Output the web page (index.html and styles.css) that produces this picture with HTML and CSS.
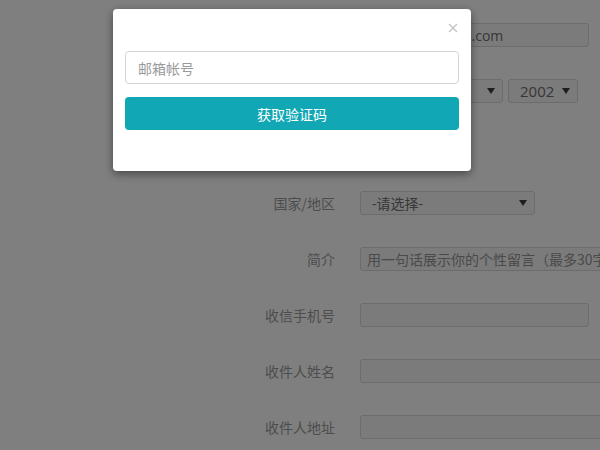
FILE: index.html
```html
<!DOCTYPE html>
<html lang="zh-CN">
<head>
<meta charset="utf-8">
<title>获取验证码</title>
<link rel="stylesheet" href="styles.css">
</head>
<body>
<form class="form">
  <label class="label">邮箱</label>
  <div class="field"><input class="text w229" type="text" value="wang56789@qq.com"></div>

  <label class="label">生日</label>
  <div class="field selects">
    <div class="select w68"><span>1</span><svg class="caret" width="8" height="6" viewBox="0 0 8 6"><path d="M0 0H8L4 6Z"/></svg></div>
    <div class="select w70"><span>1</span><svg class="caret" width="8" height="6" viewBox="0 0 8 6"><path d="M0 0H8L4 6Z"/></svg></div>
    <div class="select w70"><span>2002</span><svg class="caret" width="8" height="6" viewBox="0 0 8 6"><path d="M0 0H8L4 6Z"/></svg></div>
  </div>

  <label class="label">性别</label>
  <div class="field radios"><span>男</span><span>女</span></div>

  <label class="label">国家/地区</label>
  <div class="field"><div class="select w175"><span>-请选择-</span><svg class="caret" width="8" height="6" viewBox="0 0 8 6"><path d="M0 0H8L4 6Z"/></svg></div></div>

  <label class="label">简介</label>
  <div class="field"><input class="text w260" type="text" placeholder="用一句话展示你的个性留言（最多30字）"></div>

  <label class="label">收信手机号</label>
  <div class="field"><input class="text w229" type="text"></div>

  <label class="label">收件人姓名</label>
  <div class="field"><input class="text w260" type="text"></div>

  <label class="label">收件人地址</label>
  <div class="field"><input class="text w260" type="text"></div>
</form>

<div class="backdrop"></div>

<div class="modal">
  <div class="modal-header">
    <button class="close" type="button" aria-label="关闭">
      <svg width="10" height="10" viewBox="0 0 10 10"><path d="M1 1L9 9M9 1L1 9"/></svg>
    </button>
  </div>
  <input class="modal-input" type="text" placeholder="邮箱帐号">
  <button class="modal-btn" type="button">获取验证码</button>
</div>
</body>
</html>
```

FILE: styles.css
```css
html, body {
  margin: 0;
  padding: 0;
  width: 600px;
  height: 450px;
  overflow: hidden;
  background: #ffffff;
  font-family: "Open Sans", "Noto Sans CJK SC", sans-serif;
  font-size: 14px;
}

.form {
  display: grid;
  grid-template-columns: 335px auto;
  grid-auto-rows: 24px;
  column-gap: 25px;
  row-gap: 32px;
  padding-top: 23px;
  margin: 0;
}

.label {
  text-align: right;
  color: #9a9a9a;
  line-height: 24px;
  font-family: "Noto Sans CJK SC", sans-serif;
}

.field {
  display: flex;
  align-items: center;
  min-width: 0;
}

.text {
  box-sizing: border-box;
  height: 24px;
  border: 1px solid #d8d8d8;
  border-radius: 3px;
  background: #f6f6f6;
  padding: 0 6px;
  font-family: "Open Sans", "Noto Sans CJK SC", sans-serif;
  font-size: 14px;
  color: #6e6e6e;
  outline: none;
  flex-shrink: 0;
}

.text::placeholder {
  color: #959595;
  font-family: "Noto Sans CJK SC", sans-serif;
}

.w229 { width: 229px; }
.w260 { width: 260px; }
.w175 { width: 175px; }
.w70 { width: 70px; }
.w68 { width: 68px; }

.selects {
  gap: 5px;
}

.select {
  box-sizing: border-box;
  height: 24px;
  border: 1px solid #d8d8d8;
  border-radius: 3px;
  background: #f6f6f6;
  padding: 0 7px 0 11px;
  display: flex;
  align-items: center;
  justify-content: space-between;
  color: #6e6e6e;
  font-size: 15px;
  font-family: "Open Sans", "Noto Sans CJK SC", sans-serif;
  flex-shrink: 0;
}

.w175 {
  font-size: 14px;
}

.caret {
  fill: #3c3c3c;
}

.radios {
  gap: 20px;
  color: #777777;
  font-family: "Noto Sans CJK SC", sans-serif;
}

.backdrop {
  position: fixed;
  inset: 0;
  background: rgba(0, 0, 0, 0.5);
}

.modal {
  position: fixed;
  left: 113px;
  top: 9px;
  width: 358px;
  height: 162px;
  box-sizing: border-box;
  padding: 0 12px;
  background: #ffffff;
  border-radius: 4px;
  box-shadow: 0 3px 10px rgba(0, 0, 0, 0.45);
  display: flex;
  flex-direction: column;
}

.modal-header {
  height: 42px;
  box-sizing: border-box;
  padding-top: 13px;
  display: flex;
  justify-content: flex-end;
  align-items: flex-start;
}

.close {
  width: 12px;
  height: 12px;
  padding: 0;
  border: 0;
  background: transparent;
  display: flex;
  align-items: center;
  justify-content: center;
  cursor: pointer;
}

.close svg path {
  stroke: #c4c4c4;
  stroke-width: 1.4;
  fill: none;
}

.modal-input {
  box-sizing: border-box;
  height: 33px;
  width: 100%;
  border: 1px solid #d4d4d4;
  border-radius: 4px;
  padding: 0 12px;
  font-family: "Noto Sans CJK SC", sans-serif;
  font-size: 14px;
  color: #555555;
  outline: none;
}

.modal-input::placeholder {
  color: #9a9a9a;
}

.modal-btn {
  margin-top: 13px;
  height: 33px;
  width: 100%;
  border: 0;
  border-radius: 4px;
  background: #11a7b4;
  color: #ffffff;
  font-family: "Noto Sans CJK SC", sans-serif;
  font-size: 14px;
  padding: 0;
  cursor: pointer;
}
```
